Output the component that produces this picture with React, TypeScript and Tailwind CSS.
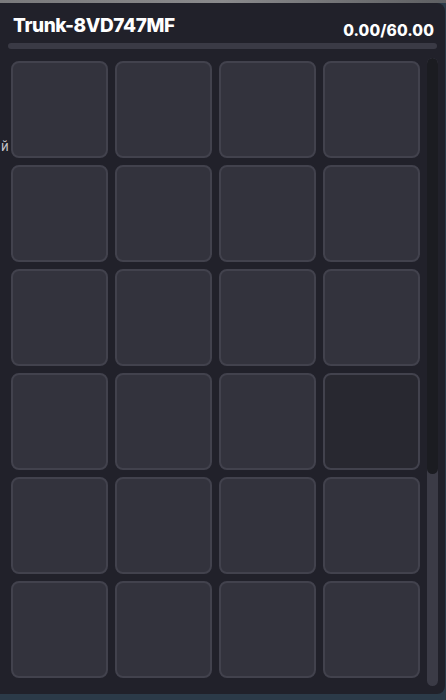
import React from 'react';

const ROWS = 9;
const COLS = 4;

// индекс ячейки, которая выглядит "пустой/выбранной"
const DIM_CELL = 15;

export default function App() {
  const cells = Array.from({ length: ROWS * COLS }, (_, i) => i);

  return (
    <div
      className="relative w-[446px] h-[700px] overflow-hidden bg-[#2b3a48]"
      style={{ fontFamily: 'Inter, Roboto, "Noto Sans", sans-serif' }}
    >
      {/* фон сверху */}
      <div className="h-[3px] w-full bg-gradient-to-r from-[#7a7a7c] via-[#8a8a8c] to-[#5e5f62]" />

      {/* Панель багажника */}
      <div className="w-[445px] h-[691px] bg-[#21212a] rounded-tr-lg rounded-br-lg flex flex-col">
        {/* Header */}
        <div className="flex items-start justify-between pl-[13px] pr-[11px] pt-[11px]">
          <h1 className="text-[19px] leading-[24px] font-extrabold text-white tracking-[-0.4px]">
            Trunk-8VD747MF
          </h1>
          <span className="mt-[7px] text-[15.5px] leading-[20px] font-extrabold text-white tracking-[0.1px]">
            0.00/60.00
          </span>
        </div>

        {/* Weight bar */}
        <div className="mx-[8px] mt-[2px] h-[6px] rounded-full bg-[#3a3a45]" />

        {/* Grid + scrollbar */}
        <div className="flex mt-[9px] pl-[11px] gap-[7px]">
          <div className="h-[624px] overflow-hidden pt-[3px]">
            <div className="grid grid-cols-4 gap-[7px]">
              {cells.map((i) => (
                <div
                  key={i}
                  className={
                    'w-[97px] h-[97px] rounded-lg border-2 border-[#42424d] ' +
                    (i === DIM_CELL ? 'bg-[#282830]' : 'bg-[#33333d]')
                  }
                />
              ))}
            </div>
          </div>

          <div className="w-[11px] h-[628px] rounded-full bg-[#3b3b46] overflow-hidden">
            <div className="h-[416px] rounded-full bg-[#1b1c21]" />
          </div>
        </div>
      </div>

      {/* обрезанная буква из соседнего окна */}
      <span className="absolute left-[1px] top-[138px] text-[13px] leading-[16px] text-[#c9c9cf]">
        й
      </span>
    </div>
  );
}
